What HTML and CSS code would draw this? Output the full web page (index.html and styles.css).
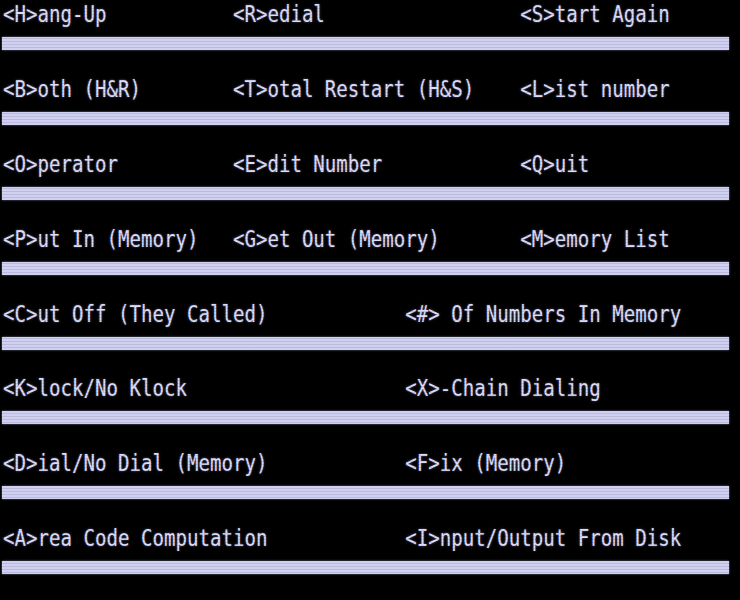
FILE: index.html
```html
<!DOCTYPE html>
<html>

<head>
    <title>Dialer Commands</title>
    <link rel="stylesheet" href="styles.css">
</head>

<body>
    <div class="screen">
        <div class="row three">
            <span>&lt;H&gt;ang-Up</span>
            <span>&lt;R&gt;edial</span>
            <span>&lt;S&gt;tart Again</span>
        </div>
        <div class="bar"></div>

        <div class="row three">
            <span>&lt;B&gt;oth (H&amp;R)</span>
            <span>&lt;T&gt;otal Restart (H&amp;S)</span>
            <span>&lt;L&gt;ist number</span>
        </div>
        <div class="bar"></div>

        <div class="row three">
            <span>&lt;O&gt;perator</span>
            <span>&lt;E&gt;dit Number</span>
            <span>&lt;Q&gt;uit</span>
        </div>
        <div class="bar"></div>

        <div class="row three">
            <span>&lt;P&gt;ut In (Memory)</span>
            <span>&lt;G&gt;et Out (Memory)</span>
            <span>&lt;M&gt;emory List</span>
        </div>
        <div class="bar"></div>

        <div class="row two">
            <span>&lt;C&gt;ut Off (They Called)</span>
            <span>&lt;#&gt; Of Numbers In Memory</span>
        </div>
        <div class="bar"></div>

        <div class="row two">
            <span>&lt;K&gt;lock/No Klock</span>
            <span>&lt;X&gt;-Chain Dialing</span>
        </div>
        <div class="bar"></div>

        <div class="row two">
            <span>&lt;D&gt;ial/No Dial (Memory)</span>
            <span>&lt;F&gt;ix (Memory)</span>
        </div>
        <div class="bar"></div>

        <div class="row two">
            <span>&lt;A&gt;rea Code Computation</span>
            <span>&lt;I&gt;nput/Output From Disk</span>
        </div>
        <div class="bar"></div>

        <!-- CRT scanlines over everything -->
        <div class="scanlines"></div>
    </div>
</body>

</html>
```

FILE: styles.css
```css
body {
    margin: 0;
    background: #000;
}

.screen {
    position: relative;
    width: 740px;
    height: 600px;
    overflow: hidden;
    background: #000;
    color: #dcdcfa;
    font-family: "DejaVu Sans Mono", monospace;
    font-size: 19.1px;
}

.row {
    display: grid;
    height: 37px;
    padding-left: 3px;
    white-space: pre;
    transform: scaleY(1.24);
    transform-origin: top;
    text-shadow: 0 0 2px rgba(200, 200, 255, 0.5);
}

.row.three {
    grid-template-columns: 20ch 25ch auto;
}

.row.two {
    grid-template-columns: 35ch auto;
}

.bar {
    height: 13px;
    width: 727px;
    margin-left: 2px;
    margin-bottom: 24.9px;
    background: #d0d0f2;
    box-shadow: 0 0 2px rgba(200, 200, 255, 0.6);
}

.scanlines {
    position: absolute;
    inset: 0;
    pointer-events: none;
    background: repeating-linear-gradient(to bottom,
            transparent 0,
            transparent 2px,
            rgba(0, 0, 0, 0.1) 2px,
            rgba(0, 0, 0, 0.1) 3px);
}
```
